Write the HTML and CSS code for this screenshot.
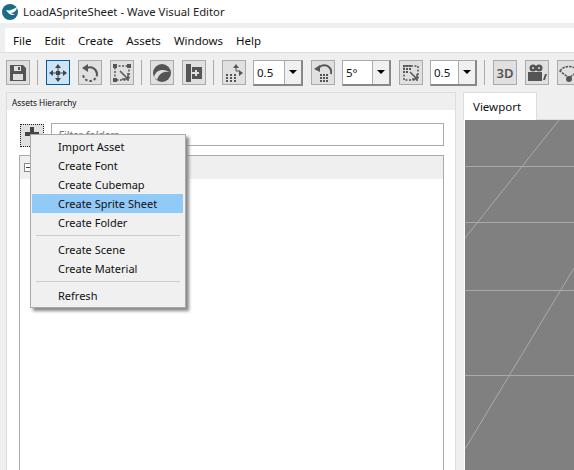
FILE: index.html
```html
<!DOCTYPE html>
<html>
<head>
	<meta charset="UTF-8">
	<title>LoadASpriteSheet - Wave Visual Editor</title>
	<link rel="stylesheet" href="styles.css">
</head>
<body>
	<div class="titlebar">
		<svg class="appicon" width="16" height="16" viewBox="0 0 16 16">
			<circle cx="8" cy="8" r="8" fill="#1b6a86"/>
			<path d="M4 6C7 7 10 6 15 3C15 6 12 9 9 9C10 10 12 10 13 10C11 12 7 11 4 6Z" fill="#fff"/>
		</svg>
		<span>LoadASpriteSheet - Wave Visual Editor</span>
	</div>
	<div class="menubar">
		<span>File</span>
		<span>Edit</span>
		<span>Create</span>
		<span>Assets</span>
		<span>Windows</span>
		<span>Help</span>
	</div>
	<div class="toolbar">
		<div class="tool">
			<svg width="18" height="18" viewBox="0 0 18 18"><path d="M1 1H14L17 4V17H1Z" fill="#555"/><rect x="5" y="2" width="7" height="5" fill="#e0e0e0"/><rect x="9" y="3" width="2" height="3" fill="#555"/><rect x="4" y="10" width="10" height="6" fill="#e0e0e0"/></svg>
		</div>
		<div class="sep"></div>
		<div class="tool active">
			<svg width="18" height="18" viewBox="0 0 18 18"><path d="M9 0L12 4H6ZM9 18L6 14H12ZM0 9L4 6V12ZM18 9L14 12V6Z" fill="#444"/><rect x="7" y="7" width="4" height="4" fill="#444"/><path d="M9 4V14M4 9H14" stroke="#444"/></svg>
		</div>
		<div class="tool">
			<svg width="18" height="18" viewBox="0 0 18 18"><path d="M6 4A7 7 0 0 1 16 10" fill="none" stroke="#555" stroke-width="2"/><path d="M16 10A7 7 0 0 1 2 10" fill="none" stroke="#555" stroke-width="2" stroke-dasharray="2.500 2"/><path d="M1 4L7 0V8Z" fill="#555"/></svg>
		</div>
		<div class="tool">
			<svg width="18" height="18" viewBox="0 0 18 18"><rect x="2" y="2" width="14" height="14" fill="none" stroke="#555" stroke-width="1.500" stroke-dasharray="2 1.500"/><rect x="0" y="0" width="4" height="4" fill="#555"/><rect x="14" y="0" width="4" height="4" fill="#555"/><rect x="0" y="14" width="4" height="4" fill="#555"/><path d="M7 7L14 14M15 9V15H9" fill="none" stroke="#555" stroke-width="1.500"/></svg>
		</div>
		<div class="sep"></div>
		<div class="tool">
			<svg width="18" height="18" viewBox="0 0 18 18"><circle cx="9" cy="9" r="9" fill="#555"/><path d="M1 13C3 6 9 4 17 8C11 7 6 9 4 16Z" fill="#e0e0e0"/></svg>
		</div>
		<div class="tool">
			<svg width="18" height="18" viewBox="0 0 18 18"><path d="M1 0H6V18H1Z" fill="#555"/><path d="M7 3H17V15H7Z" fill="#555"/><path d="M7 9H14M11 6V12" stroke="#e0e0e0" stroke-width="2"/></svg>
		</div>
		<div class="sep"></div>
		<div class="tool">
			<svg width="18" height="18" viewBox="0 0 18 18"><path d="M11 0L14 4H8ZM18 9L14 12V6Z" fill="#555"/><path d="M11 4V7M11 7H14" stroke="#555"/><path d="M1 10H3V12H1ZM5 10H7V12H5ZM9 10H11V12H9ZM1 13H3V15H1ZM5 13H7V15H5ZM9 13H11V15H9ZM1 16H3V18H1ZM5 16H7V18H5ZM9 16H11V18H9Z" fill="#555"/></svg>
		</div>
		<div class="combo wide"><span class="value">0.5</span><span class="arrow"></span></div>
		<div class="tool">
			<svg width="18" height="18" viewBox="0 0 18 18"><path d="M4 5A7 7 0 0 1 17 10" fill="none" stroke="#555" stroke-width="2"/><path d="M0 5L6 1V8Z" fill="#555"/><path d="M6 10H8V12H6ZM9 10H11V12H9ZM12 10H14V12H12ZM6 13H8V15H6ZM9 13H11V15H9ZM12 13H14V15H12ZM6 16H8V18H6ZM9 16H11V18H9ZM12 16H14V18H12Z" fill="#555"/></svg>
		</div>
		<div class="combo"><span class="value">5°</span><span class="arrow"></span></div>
		<div class="tool">
			<svg width="18" height="18" viewBox="0 0 18 18"><rect x="2" y="2" width="14" height="14" fill="none" stroke="#555" stroke-width="1.500" stroke-dasharray="2 1.500"/><path d="M1 1H3V3H1ZM4 1H6V3H4ZM7 1H9V3H7ZM1 4H3V6H1ZM4 4H6V6H4ZM7 4H9V6H7ZM1 7H3V9H1ZM4 7H6V9H4Z" fill="#555"/><path d="M8 8L14 14M15 10V15H10" fill="none" stroke="#555" stroke-width="1.500"/></svg>
		</div>
		<div class="combo short"><span class="value">0.5</span><span class="arrow"></span></div>
		<div class="sep"></div>
		<div class="tool label">3D</div>
		<div class="tool">
			<svg width="20" height="18" viewBox="0 0 20 18"><circle cx="6" cy="4" r="3.500" fill="#555"/><circle cx="12" cy="4" r="3.500" fill="#555"/><circle cx="6" cy="4" r="1" fill="#e0e0e0"/><circle cx="12" cy="4" r="1" fill="#e0e0e0"/><rect x="1" y="8" width="14" height="9" fill="#555"/><path d="M16 16L18 10H20L18 16Z" fill="#555"/></svg>
		</div>
		<div class="tool">
			<svg width="20" height="18" viewBox="0 0 20 18"><path d="M1 7C5 1 15 1 19 7L10 14Z" fill="none" stroke="#555" stroke-width="1.500" stroke-dasharray="2.500 1"/><circle cx="10" cy="15" r="3" fill="#555"/></svg>
		</div>
	</div>
	<div class="main">
		<div class="panel">
			<div class="panel-head">Assets Hierarchy</div>
			<div class="panel-body">
				<div class="filter-row">
					<div class="add-btn">
						<svg width="14" height="14" viewBox="0 0 14 14"><path d="M7 0V14M0 7H14" stroke="#444" stroke-width="4"/></svg>
					</div>
					<div class="filter">Filter folders</div>
				</div>
				<div class="tree">
					<div class="tree-head"><span class="minus"></span></div>
				</div>
			</div>
		</div>
		<div class="docs">
			<div class="tabs"><div class="tab">Viewport</div></div>
			<div class="viewport">
				<svg width="109" height="350" viewBox="465 120 109 350">
					<path d="M465 166.500H574M465 222.500H574M465 290.500H574M465 375.500H574M559 120L465 238M574 268L465 449" fill="none" stroke="#aaa"/>
				</svg>
			</div>
		</div>
	</div>
	<div class="popup">
		<div class="item">Import Asset</div>
		<div class="item">Create Font</div>
		<div class="item">Create Cubemap</div>
		<div class="item on">Create Sprite Sheet</div>
		<div class="item">Create Folder</div>
		<div class="line"></div>
		<div class="item">Create Scene</div>
		<div class="item">Create Material</div>
		<div class="line"></div>
		<div class="item">Refresh</div>
	</div>
</body>
</html>
```

FILE: styles.css
```css
*{
	box-sizing: border-box;
}
body{
	margin: 0;
	width: 574px;
	height: 470px;
	overflow: hidden;
	position: relative;
	background: #efefef;
	font-family: "Noto Sans", "Liberation Sans", sans-serif;
	font-size: 11px;
	color: #111;
}
.titlebar{
	height: 23px;
	background: #fff;
	display: flex;
	align-items: center;
	gap: 5px;
	padding-left: 2px;
	font-size: 11.3px;
	color: #222;
}
.menubar{
	height: 24px;
	margin: 5px 0 0 5px;
	background: #fff;
	display: flex;
	align-items: center;
	gap: 13px;
	padding-left: 8px;
	font-size: 11.5px;
}
.toolbar{
	height: 40px;
	border-top: 1px solid #ddd;
	display: flex;
	align-items: center;
	padding-left: 6px;
	gap: 8px;
	overflow: hidden;
}
.tool{
	width: 24px;
	height: 25px;
	flex: none;
	background: #e0e0e0;
	border: 1px solid #aaa;
	display: flex;
	align-items: center;
	justify-content: center;
}
.tool.active{
	background: #cde4f7;
	border-color: #005a9e;
}
.tool.label{
	font-size: 13px;
	font-weight: 600;
	color: #555;
}
.sep{
	width: 1px;
	height: 25px;
	flex: none;
	background: #aaa;
	margin-left: -1px;
}
.combo{
	width: 49px;
	height: 26px;
	flex: none;
	margin-left: -1px;
	background: #fff;
	border: 1px solid #aaa;
	border-right: 2px solid #888;
	border-bottom: 2px solid #888;
	display: flex;
}
.combo.wide{
	width: 50px;
}
.combo.short{
	width: 47px;
}
.value{
	flex: 1;
	padding-left: 3px;
	line-height: 23px;
	font-size: 11.5px;
}
.arrow{
	width: 17px;
	background: #f0f0f0;
	border-left: 1px solid #aaa;
	display: flex;
	align-items: center;
	justify-content: center;
}
.arrow:after{
	content: "";
	border: 4px solid transparent;
	border-top: 4px solid #000;
	border-bottom-width: 0;
}
.main{
	display: flex;
	height: 378px;
}
.panel{
	width: 450px;
	margin-left: 6px;
	flex: none;
	border: 1px solid #ddd;
	border-bottom: 0;
	display: flex;
	flex-direction: column;
}
.panel-head{
	height: 17px;
	font-size: 8.3px;
	line-height: 20px;
	padding-left: 5px;
}
.panel-body{
	flex: 1;
	background: #fff;
	padding: 13px 11px 0 12px;
}
.filter-row{
	display: flex;
	gap: 7px;
	margin-left: 1px;
}
.add-btn{
	width: 24px;
	height: 23px;
	flex: none;
	margin-top: 1px;
	padding-bottom: 3px;
	background: #e0e0e0;
	border: 1px dotted #222;
	display: flex;
	align-items: center;
	justify-content: center;
}
.filter{
	flex: 1;
	height: 23px;
	border: 1px solid #aaa;
	padding-left: 6px;
	line-height: 21px;
	color: #777;
	font-style: italic;
}
.tree{
	height: 320px;
	margin-top: 8px;
	border: 1px solid #aaa;
}
.tree-head{
	height: 23px;
	background: #efefef;
	display: flex;
	align-items: center;
	padding-left: 4px;
}
.minus{
	width: 9px;
	height: 9px;
	border: 1px solid #888;
	background: linear-gradient(#444, #444) center / 5px 1px no-repeat #fff;
}
.docs{
	margin-left: 7px;
	flex: 1;
}
.tabs{
	height: 28px;
	border-bottom: 1px solid #ddd;
}
.tab{
	width: 74px;
	height: 28px;
	background: #fff;
	border: 1px solid #ddd;
	border-bottom: 0;
	padding-left: 9px;
	line-height: 27px;
	font-size: 11.5px;
}
.viewport{
	margin-left: 1px;
	height: 350px;
	background: #808080;
	border-left: 1px solid #fff;
}
.viewport svg{
	display: block;
}
.popup{
	position: absolute;
	left: 30px;
	top: 134px;
	width: 156px;
	height: 174px;
	padding: 2px 2px 2px 1px;
	background: #f0f0f0;
	border: 1px solid #aaa;
	box-shadow: 3px 3px 3px #888;
}
.item{
	height: 19px;
	line-height: 19px;
	padding-left: 26px;
}
.item.on{
	background: #91c9f7;
}
.line{
	height: 1px;
	background: #ccc;
	margin: 3px 3px 4px 4px;
}
```
